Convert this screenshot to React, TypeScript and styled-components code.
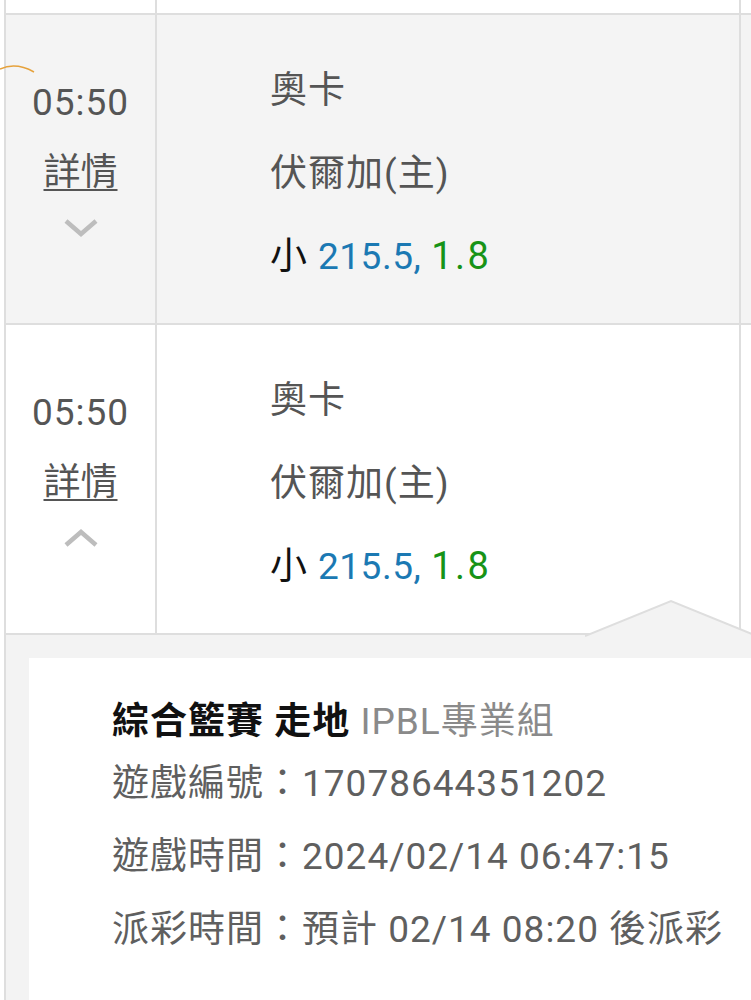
import React from "react";
import styled, { createGlobalStyle } from "styled-components";

const GlobalStyle = createGlobalStyle`
  html, body {
    margin: 0;
    padding: 0;
    background: #ffffff;
    overflow: hidden;
  }
  body {
    font-family: "Roboto", "Noto Sans CJK TC", sans-serif;
    letter-spacing: 1px;
  }
`;

const Page = styled.div`
  position: relative;
  width: 751px;
  height: 1000px;
  overflow: hidden;
`;

const Table = styled.div`
  margin-left: 4px;
  border-left: 2px solid #dedede;
`;

const Row = styled.div<{ $shade?: boolean; $height: number }>`
  display: grid;
  grid-template-columns: 151px 584px 1fr;
  height: ${(p) => p.$height}px;
  background: ${(p) => (p.$shade ? "#f4f4f4" : "#ffffff")};
  border-bottom: 2px solid #dedede;
`;

const Cell = styled.div`
  border-right: 2px solid #dedede;
`;

const TimeCell = styled(Cell)`
  display: flex;
  flex-direction: column;
  align-items: center;
  padding-top: 53px;
  color: #555555;
`;

const Time = styled.div`
  font-size: 37px;
  line-height: 70px;
`;

const DetailLink = styled.a`
  font-size: 37px;
  line-height: 70px;
  color: #555555;
  letter-spacing: 0;
  text-decoration: underline;
  text-decoration-thickness: 2px;
  text-underline-offset: 4px;
`;

const Chevron = styled.svg`
  margin-top: 10px;
`;

const EventCell = styled(Cell)`
  padding: 34px 0 0 113px;
`;

const Line = styled.div`
  font-size: 37px;
  line-height: 83px;
  color: #555555;
  white-space: nowrap;
`;

const Pick = styled.span`
  color: #111111;
  margin-right: 10px;
`;

const Handicap = styled.span`
  color: #1b79b3;
  letter-spacing: 0.5px;
`;

const Odds = styled.span`
  color: #179317;
  font-size: 38px;
  letter-spacing: 2.5px;
  margin-left: 10px;
`;

const DetailPanel = styled.div`
  position: relative;
  background: #f3f3f3;
  padding: 23px 0 0 23px;
  height: 400px;
`;

const Pointer = styled.svg`
  position: absolute;
  top: -36px;
  left: 579px;
`;

const Card = styled.div`
  background: #ffffff;
  padding: 39px 0 40px 83px;
  height: 400px;
`;

const Title = styled.div`
  font-size: 37px;
  line-height: 50px;
  white-space: nowrap;
`;

const Strong = styled.span`
  font-weight: 700;
  color: #111111;
`;

const League = styled.span`
  color: #8a8a8a;
`;

const InfoLine = styled.div`
  font-size: 37px;
  line-height: 73px;
  color: #5f5f5f;
  white-space: nowrap;
`;

const Mark = styled.svg`
  position: absolute;
  top: 60px;
  left: 0;
`;

type Match = {
  time: string;
  team: string;
  home: string;
  line: string;
  odds: string;
  open: boolean;
};

const matches: Match[] = [
  { time: "05:50", team: "奧卡", home: "伏爾加(主)", line: "215.5,", odds: "1.8", open: false },
  { time: "05:50", team: "奧卡", home: "伏爾加(主)", line: "215.5,", odds: "1.8", open: true },
];

function ChevronIcon({ up }: { up: boolean }) {
  return (
    <Chevron width="36" height="20" viewBox="0 0 36 20">
      <path
        d={up ? "M3 17 L18 4 L33 17" : "M3 3 L18 16 L33 3"}
        fill="none"
        stroke="#bdbdbd"
        strokeWidth="4.5"
      />
    </Chevron>
  );
}

export default function App() {
  return (
    <Page>
      <GlobalStyle />
      <Table>
        <Row $height={13}>
          <Cell />
          <Cell />
          <div />
        </Row>
        {matches.map((m, i) => (
          <Row key={i} $shade={!m.open} $height={308}>
            <TimeCell>
              <Time>{m.time}</Time>
              <DetailLink>詳情</DetailLink>
              <ChevronIcon up={m.open} />
            </TimeCell>
            <EventCell>
              <Line>{m.team}</Line>
              <Line>{m.home}</Line>
              <Line>
                <Pick>小</Pick>
                <Handicap>{m.line}</Handicap>
                <Odds>{m.odds}</Odds>
              </Line>
            </EventCell>
            <div />
          </Row>
        ))}
        <DetailPanel>
          <Pointer width="172" height="38" viewBox="0 0 172 38">
            <path d="M0 37 L86 2 L172 37" fill="#f3f3f3" stroke="#dedede" strokeWidth="2" />
          </Pointer>
          <Card>
            <Title>
              <Strong>綜合籃賽 走地</Strong> <League>IPBL專業組</League>
            </Title>
            <InfoLine>遊戲編號：17078644351202</InfoLine>
            <InfoLine>遊戲時間：2024/02/14 06:47:15</InfoLine>
            <InfoLine>派彩時間：預計 02/14 08:20 後派彩</InfoLine>
          </Card>
        </DetailPanel>
      </Table>
      <Mark width="36" height="16" viewBox="0 0 36 16">
        <path d="M0 9 Q 16 2 34 12" fill="none" stroke="#e6a23c" strokeWidth="1.5" />
      </Mark>
    </Page>
  );
}
